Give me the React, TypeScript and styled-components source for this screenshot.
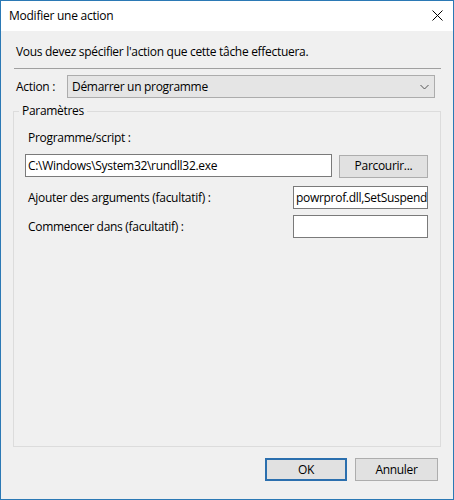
import React from "react";
import styled, { createGlobalStyle } from "styled-components";

const Global = createGlobalStyle`
  html, body { margin: 0; padding: 0; background: #f0f0f0; }
  body { font-family: "Open Sans", "Noto Sans", sans-serif; font-size: 12px; color: #000; }
  * { box-sizing: border-box; }
`;

const Window = styled.div`
  width: 454px;
  height: 500px;
  border: 1px solid #2b79b5;
  background: #f0f0f0;
  display: flex;
  flex-direction: column;
`;

const TitleBar = styled.div`
  height: 30px;
  background: #ffffff;
  display: flex;
  align-items: center;
  justify-content: space-between;
  padding: 0 9px 0 8px;
  flex-shrink: 0;
`;

const Title = styled.span`
  font-size: 12px;
  line-height: 16px;
  letter-spacing: -0.25px;
  margin-top: -1px;
`;

const CloseIcon = styled.svg`
  width: 11px;
  height: 11px;
  margin-right: 1px;
  margin-top: -1px;
`;

const Body = styled.div`
  flex: 1;
  display: flex;
  flex-direction: column;
  padding: 0 12px;
`;

const Text = styled.div<{ $indent?: number }>`
  line-height: 16px;
  letter-spacing: -0.3px;
  white-space: nowrap;
  padding-left: ${(p) => p.$indent ?? 0}px;
`;

const Intro = styled(Text)`
  margin-top: 13px;
`;

const Separator = styled.div`
  margin-top: 8px;
  height: 1px;
  background: #a0a0a0;
  margin-left: 1px;
  width: 427px;
`;

const ActionRow = styled.div`
  margin-top: 6px;
  display: flex;
  align-items: center;
  height: 23px;
`;

const ActionLabel = styled(Text)`
  width: 54px;
  flex-shrink: 0;
`;

const Select = styled.div`
  width: 368px;
  height: 23px;
  background: #e5e5e5;
  border: 1px solid #acacac;
  display: flex;
  align-items: center;
  justify-content: space-between;
  padding: 0 5px 0 4px;
`;

const Chevron = styled.svg`
  width: 9px;
  height: 6px;
`;

const Group = styled.fieldset`
  margin: 5px 0 0 0;
  padding: 0 12px 0 11px;
  border: 1px solid #dcdcdc;
  min-width: 0;
  flex: 1;
  display: block;
`;

const Legend = styled.legend`
  padding: 0 3px;
  margin-left: -6px;
  line-height: 16px;
  letter-spacing: -0.3px;
`;

const FieldLabel = styled(Text)`
  margin-top: 11px;
`;

const Row = styled.div<{ $top: number }>`
  display: flex;
  align-items: center;
  justify-content: space-between;
  margin-top: ${(p) => p.$top}px;
  height: 23px;
`;

const Input = styled.div<{ $width: number }>`
  width: ${(p) => p.$width}px;
  height: 23px;
  background: #ffffff;
  border: 1px solid #7a7a7a;
  padding: 0 2px;
  line-height: 21px;
  letter-spacing: -0.3px;
  white-space: nowrap;
  overflow: hidden;
`;

const Button = styled.button<{ $primary?: boolean }>`
  width: ${(p) => (p.$primary ? 82 : 83)}px;
  height: 23px;
  background: #e1e1e1;
  border: ${(p) => (p.$primary ? "2px solid #2b6fae" : "1px solid #adadad")};
  font-family: inherit;
  font-size: 12px;
  letter-spacing: -0.3px;
  color: #000;
  padding: 0;
  line-height: 16px;
`;

const BrowseButton = styled(Button)`
  width: 89px;
  margin-top: 1px;
`;

const Footer = styled.div`
  display: flex;
  justify-content: flex-end;
  gap: 8px;
  margin: 11px 3px 18px 0;
`;

export default function App() {
  return (
    <>
      <Global />
      <Window>
        <TitleBar>
          <Title>Modifier une action</Title>
          <CloseIcon viewBox="0 0 11 11">
            <path d="M0.5 0.5 L10.5 10.5 M10.5 0.5 L0.5 10.5" stroke="#000" strokeWidth="1" fill="none" />
          </CloseIcon>
        </TitleBar>
        <Body>
          <Intro $indent={3}>Vous devez spécifier l'action que cette tâche effectuera.</Intro>
          <Separator />
          <ActionRow>
            <ActionLabel $indent={3}>Action :</ActionLabel>
            <Select>
              <Text>Démarrer un programme</Text>
              <Chevron viewBox="0 0 9 6">
                <path d="M0.5 1 L4.5 5 L8.5 1" stroke="#555" strokeWidth="1" fill="none" />
              </Chevron>
            </Select>
          </ActionRow>
          <Group>
            <Legend>Paramètres</Legend>
            <FieldLabel $indent={3}>Programme/script :</FieldLabel>
            <Row $top={8}>
              <Input $width={307}>C:\Windows\System32\rundll32.exe</Input>
              <BrowseButton>Parcourir...</BrowseButton>
            </Row>
            <Row $top={9}>
              <Text $indent={3}>Ajouter des arguments (facultatif) :</Text>
              <Input $width={135}>powrprof.dll,SetSuspend</Input>
            </Row>
            <Row $top={6}>
              <Text $indent={3}>Commencer dans (facultatif) :</Text>
              <Input $width={135} />
            </Row>
          </Group>
          <Footer>
            <Button $primary>OK</Button>
            <Button>Annuler</Button>
          </Footer>
        </Body>
      </Window>
    </>
  );
}
